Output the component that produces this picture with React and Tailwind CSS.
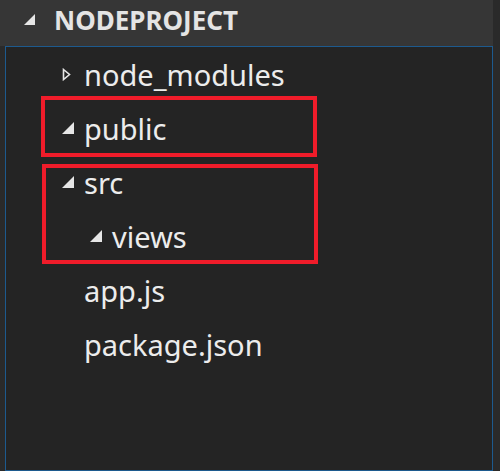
import React from "react";

const Expanded = ({ size = 12, className = "" }) => (
  <svg width={size} height={size} viewBox="0 0 12 12" className={className}>
    <polygon points="12,0 12,12 0,12" fill="#e6e6e6" />
  </svg>
);

const Collapsed = () => (
  <svg width="9" height="13" viewBox="0 0 9 13">
    <polygon points="1.5,1.5 7.5,6.5 1.5,11.5" fill="none" stroke="#e6e6e6" strokeWidth="1.6" />
  </svg>
);

const Row = ({ indent = 0, icon, label }) => (
  <div className="flex items-center h-[54px]" style={{ paddingLeft: 52 + indent }}>
    <div className="w-[26px] flex justify-start items-center pl-[4px]">{icon}</div>
    <span className="text-[29px] text-[#ececec] leading-none">{label}</span>
  </div>
);

export default function App() {
  return (
    <div className="w-[500px] h-[471px] bg-[#2a2a2a] flex flex-col overflow-hidden" style={{ fontFamily: '"Noto Sans", "Open Sans", sans-serif' }}>
      <div className="h-[46px] bg-[#363636] mr-[7px] flex items-center pl-[24px] pb-[7px] gap-[19px]">
        <Expanded size={11} />
        <span className="text-[26px] font-bold text-[#e4e4e4] leading-none">NODEPROJECT</span>
      </div>
      <div className="relative flex-1 ml-[5px] mr-[7px] border border-[#1d5a8e] bg-[#242424]">
        <Row icon={<Collapsed />} label="node_modules" />
        <Row icon={<Expanded />} label="public" />
        <Row icon={<Expanded />} label="src" />
        <Row indent={28} icon={<Expanded />} label="views" />
        <Row label="app.js" />
        <Row label="package.json" />
        <div className="absolute left-[35px] top-[49px] w-[276px] h-[61px] border-[4px] border-[#f01c2a]" />
        <div className="absolute left-[36px] top-[117px] w-[276px] h-[100px] border-[4px] border-[#f01c2a]" />
      </div>
    </div>
  );
}
